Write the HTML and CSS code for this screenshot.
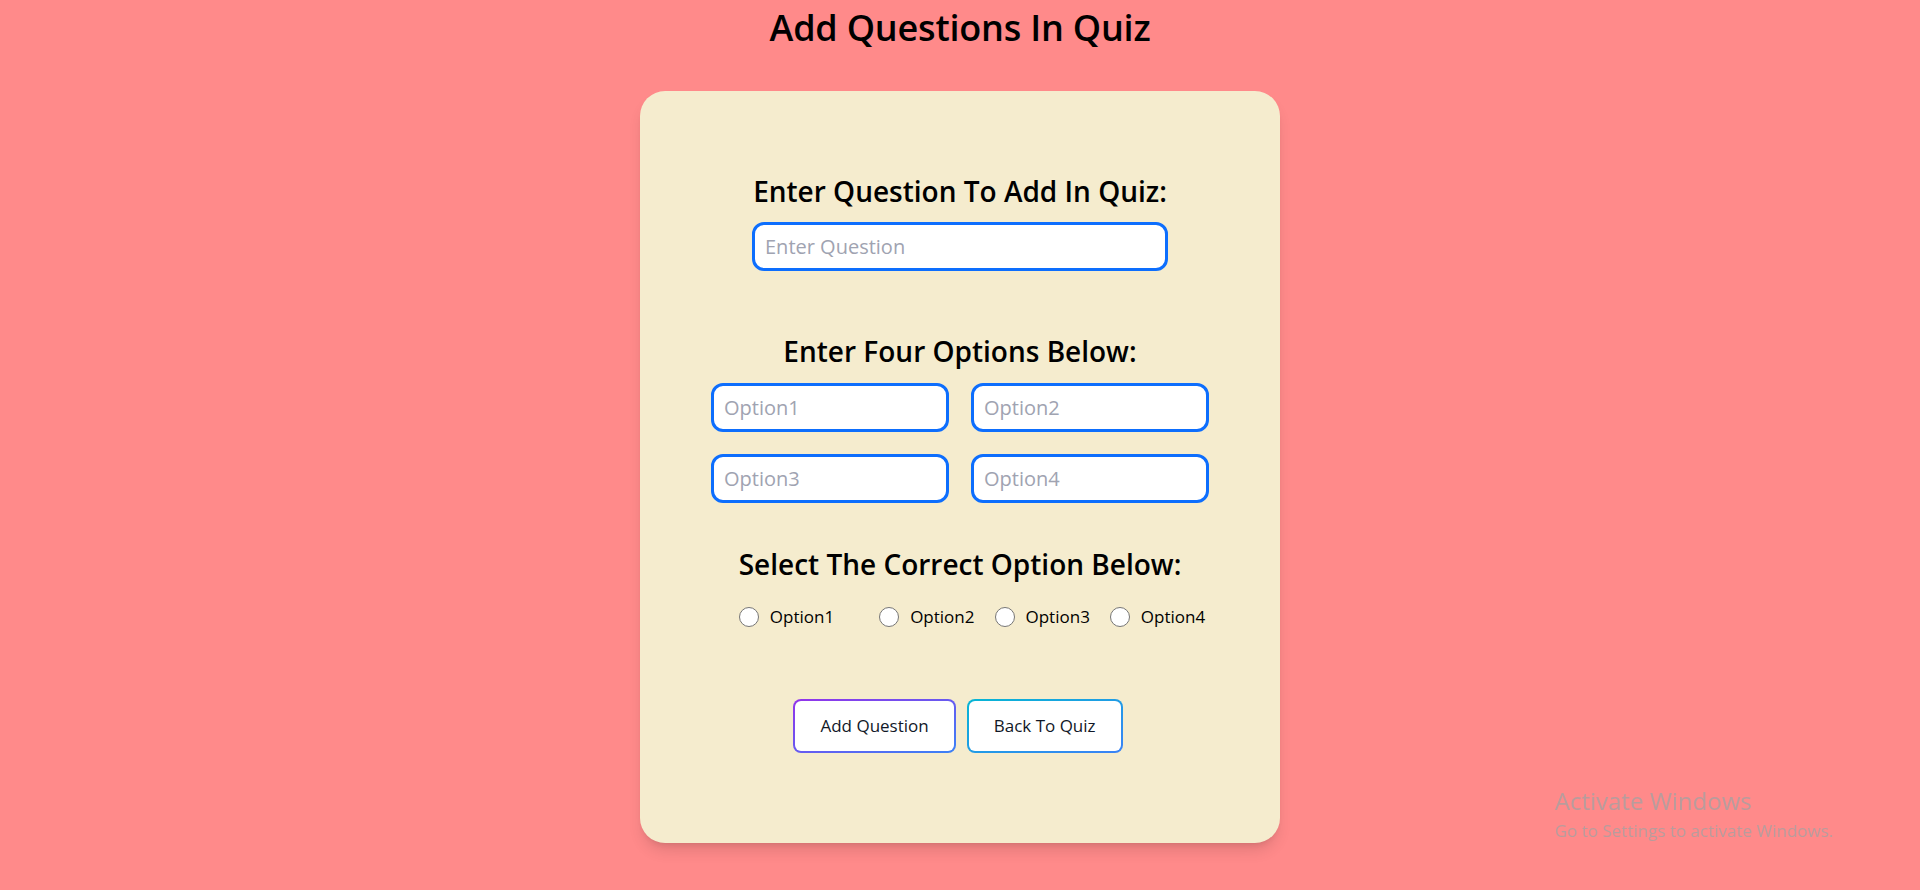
FILE: index.html
```html
<!DOCTYPE html>
<html lang="en">
<head>
<meta charset="utf-8">
<title>Add Questions In Quiz</title>
<link rel="stylesheet" href="styles.css">
</head>
<body>
  <h1 class="page-title">Add Questions In Quiz</h1>

  <main class="card">
    <section class="block block-question">
      <h2 class="block-label">Enter Question To Add In Quiz:</h2>
      <input class="field field-question" type="text" placeholder="Enter Question">
    </section>

    <section class="block block-options">
      <h2 class="block-label">Enter Four Options Below:</h2>
      <div class="options-grid">
        <input class="field" type="text" placeholder="Option1">
        <input class="field" type="text" placeholder="Option2">
        <input class="field" type="text" placeholder="Option3">
        <input class="field" type="text" placeholder="Option4">
      </div>
    </section>

    <section class="block block-correct">
      <h2 class="block-label">Select The Correct Option Below:</h2>
      <div class="radio-row">
        <label class="radio radio-first"><input type="radio" name="correct"><span>Option1</span></label>
        <label class="radio"><input type="radio" name="correct"><span>Option2</span></label>
        <label class="radio"><input type="radio" name="correct"><span>Option3</span></label>
        <label class="radio"><input type="radio" name="correct"><span>Option4</span></label>
      </div>
    </section>

    <div class="actions">
      <button class="grad-btn grad-purple" type="button"><span class="grad-inner">Add Question</span></button>
      <button class="grad-btn grad-cyan" type="button"><span class="grad-inner">Back To Quiz</span></button>
    </div>
  </main>

  <div class="watermark">
    <div class="wm-title">Activate Windows</div>
    <div class="wm-sub">Go to Settings to activate Windows.</div>
  </div>
</body>
</html>
```

FILE: styles.css
```css
* {
  box-sizing: border-box;
}

html, body {
  margin: 0;
  padding: 0;
}

body {
  background: #ff8a8a;
  font-family: "Open Sans", "Noto Sans", sans-serif;
  color: #000;
  min-height: 890px;
  overflow: hidden;
}

.page-title {
  margin: 8px 0 0;
  font-size: 36px;
  line-height: 40px;
  font-weight: 600;
  letter-spacing: -0.2px;
  text-align: center;
}

.card {
  width: 640px;
  height: 752px;
  margin: 43px auto 0;
  padding: 82px 0 90px;
  background: #f5ecce;
  border-radius: 25px;
  box-shadow: 0 10px 15px -3px rgba(0, 0, 0, 0.12), 0 4px 6px -4px rgba(0, 0, 0, 0.12);
  display: flex;
  flex-direction: column;
  align-items: center;
}

.block {
  display: flex;
  flex-direction: column;
  align-items: center;
}

.block-label {
  margin: 0;
  font-size: 28px;
  line-height: 36px;
  font-weight: 600;
  text-align: center;
}

.field {
  display: block;
  height: 49px;
  border: 3px solid #0d6efd;
  border-radius: 12px;
  background: #fff;
  padding: 0 10px;
  font-family: inherit;
  font-size: 20px;
  color: #111;
  outline: none;
}

.field::placeholder {
  color: #a0a3b1;
}

.field-question {
  width: 416px;
  margin-top: 13px;
}

.block-options {
  margin-top: 62px;
}

.options-grid {
  margin-top: 14px;
  display: grid;
  grid-template-columns: 238px 238px;
  gap: 22px;
}

.options-grid .field {
  width: 238px;
}

.block-correct {
  margin-top: 43px;
}

.radio-row {
  margin-top: 21px;
  display: flex;
  justify-content: center;
  gap: 20px;
  padding-left: 24px;
}

.radio {
  display: inline-flex;
  align-items: center;
  gap: 11px;
  font-size: 17px;
  line-height: 28px;
  font-weight: 500;
  color: #000;
}

.radio-first {
  margin-right: 25px;
}

.radio input {
  appearance: none;
  -webkit-appearance: none;
  margin: 0;
  width: 20px;
  height: 20px;
  border: 1px solid #767676;
  border-radius: 50%;
  background: #fff;
}

.actions {
  margin-top: 68px;
  display: flex;
  gap: 11px;
  padding-right: 4px;
}

.grad-btn {
  border: 0;
  padding: 2px;
  border-radius: 8px;
  cursor: pointer;
  font-family: inherit;
}

.grad-purple {
  background: linear-gradient(to bottom right, #9333ea, #3b82f6);
}

.grad-cyan {
  background: linear-gradient(to bottom right, #06b6d4, #3b82f6);
}

.grad-inner {
  display: block;
  background: #fff;
  border-radius: 6px;
  padding: 11px 25px;
  font-size: 17px;
  line-height: 28px;
  font-weight: 500;
  color: #111827;
}

.watermark {
  position: fixed;
  left: 1555px;
  top: 785px;
  color: #b89c9c;
  font-family: "Open Sans", "Noto Sans", sans-serif;
  pointer-events: none;
}

.wm-title {
  font-size: 24px;
  line-height: 32px;
}

.wm-sub {
  font-size: 17px;
  line-height: 22px;
  margin-top: 3px;
}
```
